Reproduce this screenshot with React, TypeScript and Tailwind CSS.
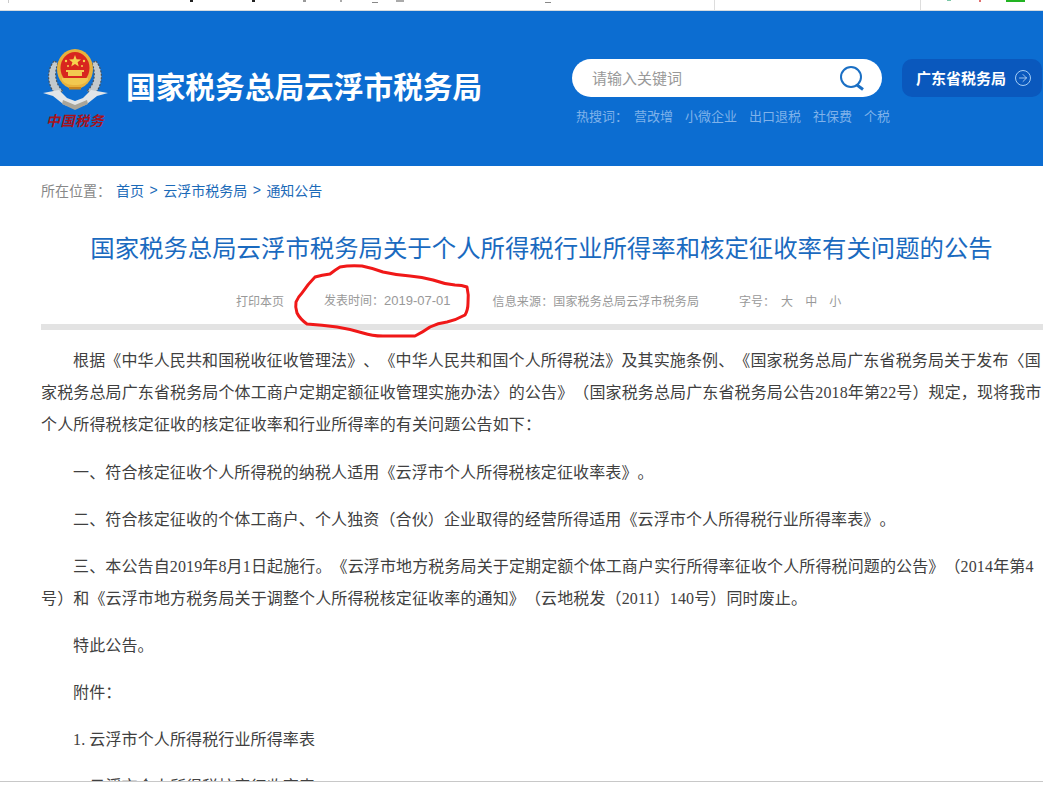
import React from 'react';
import { ArrowRight } from 'lucide-react';

const cjk = { fontFamily: '"Noto Sans CJK SC", sans-serif' };

const HOT_WORDS = ['营改增', '小微企业', '出口退税', '社保费', '个税'];

// national tax emblem, drawn small like the raster logo in the header
const Emblem = () => (
  <svg width="68" height="62" viewBox="0 0 68 62" className="block">
    <path d="M13 12 C5 22 6 36 15 46 L22 42 C14 35 13 24 17 14 Z" fill="#c3c9cc" stroke="#47525c" strokeWidth="1.2" strokeDasharray="2 1.5" />
    <path d="M55 12 C63 22 62 36 53 46 L46 42 C54 35 55 24 51 14 Z" fill="#c3c9cc" stroke="#47525c" strokeWidth="1.2" strokeDasharray="2 1.5" />
    <ellipse cx="34" cy="20" rx="18" ry="20" fill="#e8b23c" />
    <ellipse cx="34" cy="19" rx="14.5" ry="16" fill="#d8261f" />
    <path d="M34 6 l1.6 4.2 4.4 .2 -3.4 2.8 1.2 4.3 -3.8 -2.5 -3.8 2.5 1.2 -4.3 -3.4 -2.8 4.4 -.2 Z" fill="#f6d34e" />
    <circle cx="25" cy="12" r="1.2" fill="#f6d34e" />
    <circle cx="43" cy="12" r="1.2" fill="#f6d34e" />
    <circle cx="27" cy="17" r="1" fill="#f6d34e" />
    <circle cx="41" cy="17" r="1" fill="#f6d34e" />
    <path d="M25 21 h18 v2 h-2 v4 h-14 v-4 h-2 Z" fill="#f2c850" />
    <path d="M21 29 h26 v2 c-3 4 -7 5 -13 5 s-10 -1 -13 -5 Z" fill="#f2c850" />
    <path d="M28 38 h12 v2.5 h-12 Z" fill="#c9851f" />
    <path d="M2 44 L18 41 L26 49 L34 52 L42 49 L50 41 L67 44 L56 47 L46 55 C40 59 28 59 22 55 L12 47 Z" fill="#e2e5e8" />
    <path d="M22 51 L34 56 L46 51 L47 55 L34 61 L21 55 Z" fill="#a9a59a" />
  </svg>
);

const SearchIcon = () => (
  <svg width="26" height="26" viewBox="0 0 26 26" fill="none" stroke="#1a6fc4" className="block">
    <circle cx="12" cy="12" r="10" strokeWidth="2" />
    <path d="M18 20 L24 24.5" strokeWidth="3" />
  </svg>
);

// the red circle somebody drew over the date by hand
const RedCircle = () => (
  <svg width="178" height="76" viewBox="-3 -3 178 76" fill="none" className="absolute left-[293px] top-[263px] pointer-events-none">
    <path
      d="M44 1 Q54 -1 66 0 Q76 2 87 6 Q100 9 114 10 Q126 11 137 14 Q148 18 159 19 Q166 19 171 21 Q173 29 172 37 Q172 44 169 49 Q160 54 151 56 Q142 57 134 61 Q127 66 119 70 L87 70 Q76 70 67 67 Q54 63 41 61 Q26 59 11 58 Q4 53 1 47 Q-1 41 0 36 Q2 31 6 27 Q12 18 19 11 Q26 9 34 8 Q39 4 44 1 Z"
      stroke="#f01818"
      strokeWidth="3"
      strokeLinejoin="round"
    />
  </svg>
);

const Para = ({ children }: { children: React.ReactNode }) => (
  <p className="indent-[32px] text-[16px] tracking-[0.13px] leading-[32px] mb-[15px] first:mb-[16px] text-[#404040]">{children}</p>
);

const Num = ({ children }: { children: React.ReactNode }) => (
  <span className="leading-none" style={{ fontFamily: '"Liberation Serif", serif' }}>{children}</span>
);

export default function App() {
  return (
    <div className="h-[786px] overflow-hidden bg-white relative [text-spacing-trim:space-all]" style={cjk}>
      {/* browser strip left over at the top of the capture */}
      <div className="h-[11px] bg-white border-b border-[#d5dbe0] flex items-start">
        <div className="ml-[8px] w-px h-[3px] bg-[#ccc]" />
        <div className="ml-[181px] w-[3px] h-[2px] bg-[#222]" />
        <div className="ml-[59px] w-[3px] h-[2px] bg-[#222]" />
        <div className="ml-[48px] w-[3px] h-[2px] bg-[#999]" />
        <div className="ml-[34px] w-[2px] h-[2px] bg-[#aaa]" />
        <div className="ml-[30px] mt-[2px] w-[6px] h-px bg-[#888]" />
        <div className="ml-[18px] w-[8px] h-[2px] bg-[#aaa]" />
        <div className="ml-[141px] mt-[2px] w-[6px] h-px bg-[#888]" />
        <div className="ml-[163px] w-px h-[10px] bg-[#ddd]" />
        <div className="ml-[205px] w-px h-[10px] bg-[#ddd]" />
        <div className="ml-[26px] w-[4px] h-[1px] bg-[#7cc8a8]" />
        <div className="ml-[28px] w-[2px] h-[2px] bg-[#e07070]" />
        <div className="ml-[25px] w-[19px] h-[2px] bg-[#22b322]" />
      </div>

      {/* Header */}
      <div className="h-[155px] bg-[#0c6dd1] flex items-start">
        <div className="ml-[41px] mt-[38px] w-[68px] shrink-0">
          <Emblem />
          <div className="mt-[1px] text-center text-[14px] leading-[16px] font-bold italic tracking-[0.5px] text-[#a5131c] whitespace-nowrap">中国税务</div>
        </div>
        <h1 className="ml-[17px] mt-[55px] w-[359px] shrink-0 text-[29.7px] leading-[40px] font-bold text-white whitespace-nowrap">国家税务总局云浮市税务局</h1>
        <div className="ml-[87px] mt-[48px] w-[310px] shrink-0">
          <div className="h-[38px] rounded-[19px] bg-white flex items-center justify-between pl-5 pr-[17px]">
            <span className="text-[15px] text-[#999]">请输入关键词</span>
            <SearchIcon />
          </div>
          <div className="mt-[9px] pl-[4px] flex text-[13px] leading-[20px] text-[#7fb2ea] whitespace-nowrap">
            <span className="mr-[6px]">热搜词：</span>
            <div className="flex gap-[12px]">
              {HOT_WORDS.map((w) => (
                <span key={w}>{w}</span>
              ))}
            </div>
          </div>
        </div>
        <div className="ml-[20px] mt-[48px] w-[140px] h-[38px] shrink-0 rounded-[10px] bg-[#0a58bd] flex items-center pl-[14px] gap-[9px]">
          <span className="text-[15px] font-bold text-white whitespace-nowrap">广东省税务局</span>
          <span className="w-[16px] h-[16px] rounded-full border border-[#a5cdf5] flex items-center justify-center">
            <ArrowRight size={12} color="#cfe4fa" strokeWidth={1.5} />
          </span>
        </div>
      </div>

      {/* Breadcrumb */}
      <div className="pl-[41px] pt-[14px] h-[40px] flex text-[14px] leading-[20px] whitespace-nowrap">
        <span className="text-[#888] mr-[5px]">所在位置：</span>
        <span className="text-[#1b6ab8]">首页</span>
        <span className="mx-[5.5px] text-[#1b6ab8]" style={{ fontFamily: '"Liberation Sans", sans-serif' }}>&gt;</span>
        <span className="text-[#1b6ab8]">云浮市税务局</span>
        <span className="mx-[5.5px] text-[#1b6ab8]" style={{ fontFamily: '"Liberation Sans", sans-serif' }}>&gt;</span>
        <span className="text-[#1b6ab8]">通知公告</span>
      </div>

      {/* Title */}
      <h2 className="mt-[24px] pl-[40px] text-center text-[24.4px] leading-[34px] font-normal text-[#1a6abf] whitespace-nowrap">
        国家税务总局云浮市税务局关于个人所得税行业所得率和核定征收率有关问题的公告
      </h2>

      {/* Meta row */}
      <div className="mt-[27px] h-[20px] pl-[236px] flex items-center text-[12px] text-[#999] whitespace-nowrap">
        <span>打印本页</span>
        <span className="ml-[40px]">
          发表时间：<span className="text-[13px]" style={{ fontFamily: '"Liberation Sans", sans-serif' }}>2019-07-01</span>
        </span>
        <span className="ml-[42px] tracking-[0.15px]">信息来源：国家税务总局云浮市税务局</span>
        <span className="ml-[40px]">字号：</span>
        <span className="ml-[6px]">大</span>
        <span className="ml-[12px]">中</span>
        <span className="ml-[12px]">小</span>
      </div>

      <div className="ml-[41px] mt-[13px] h-[6px] bg-[#e3e3e3]" />

      {/* Article body, runs up to the right edge of the window */}
      <div className="ml-[41px] mt-[13px]">
        <Para>
          根据《中华人民共和国税收征收管理法》、《中华人民共和国个人所得税法》及其实施条例、《国家税务总局广东省税务局关于发布〈国家税务总局广东省税务局个体工商户定期定额征收管理实施办法〉的公告》（国家税务总局广东省税务局公告<Num>2018</Num>年第<Num>22</Num>号）规定，现将我市个人所得税核定征收的核定征收率和行业所得率的有关问题公告如下：
        </Para>
        <Para>一、符合核定征收个人所得税的纳税人适用《云浮市个人所得税核定征收率表》。</Para>
        <Para>二、符合核定征收的个体工商户、个人独资（合伙）企业取得的经营所得适用《云浮市个人所得税行业所得率表》。</Para>
        <Para>
          三、本公告自<Num>2019</Num>年<Num>8</Num>月<Num>1</Num>日起施行。《云浮市地方税务局关于定期定额个体工商户实行所得率征收个人所得税问题的公告》（<Num>2014</Num>年第<Num>4</Num>号）和《云浮市地方税务局关于调整个人所得税核定征收率的通知》（云地税发（<Num>2011</Num>）<Num>140</Num>号）同时废止。
        </Para>
        <Para>特此公告。</Para>
        <Para>附件：</Para>
        <Para>
          <Num>1.</Num>
          <span className="ml-[4px]">云浮市个人所得税行业所得率表</span>
        </Para>
        <Para>
          <Num>2.</Num>
          <span className="ml-[4px]">云浮市个人所得税核定征收率表</span>
        </Para>
      </div>

      <RedCircle />

      {/* window edge at the bottom of the capture */}
      <div className="absolute left-0 right-0 bottom-0 h-[5px] bg-white border-t border-[#c8c8c8]" />
    </div>
  );
}
